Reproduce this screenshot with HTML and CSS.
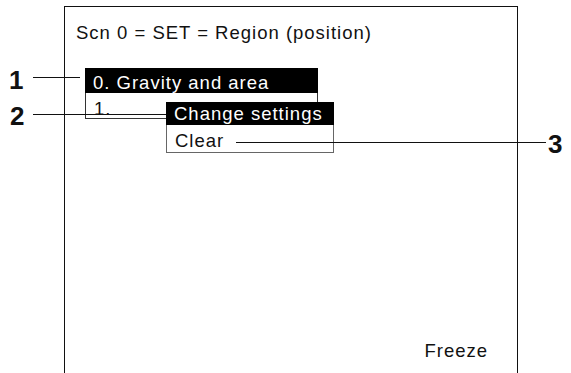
FILE: index.html
```html
<!DOCTYPE html>
<html lang="en">
<head>
    <meta charset="UTF-8">
    <meta name="viewport" content="width=device-width, initial-scale=1.0">
    <title>Scn 0 - Region (position)</title>
    <link rel="stylesheet" href="styles.css">
</head>
<body>
    <div class="page">
        <!-- Tela do monitor -->
        <div class="screen">
            <div class="title">Scn 0 = SET = Region (position)</div>

            <div class="menu">
                <div class="menu-item selected">0. Gravity and area</div>
                <div class="menu-item">1.</div>

                <!-- Submenu aberto -->
                <div class="submenu">
                    <div class="menu-item selected">Change settings</div>
                    <div class="menu-item">Clear</div>
                </div>
            </div>

            <div class="status">Freeze</div>
        </div>

        <!-- Indicações numeradas -->
        <svg class="leaders" width="571" height="373" viewBox="0 0 571 373">
            <line x1="33" y1="77.5" x2="80" y2="77.5" />
            <line x1="33" y1="114.5" x2="166" y2="114.5" />
            <line x1="236" y1="142.5" x2="546" y2="142.5" />
        </svg>
        <span class="callout callout-1">1</span>
        <span class="callout callout-2">2</span>
        <span class="callout callout-3">3</span>
    </div>
</body>
</html>
```

FILE: styles.css
```css
body {
    margin: 0;
    padding: 0;
    background-color: #fff;
    color: #111;
    font-family: "Liberation Sans", Arial, sans-serif;
}
.page {
    position: relative;
    width: 571px;
    height: 373px;
    overflow: hidden;
}
.screen {
    box-sizing: border-box;
    display: flex;
    flex-direction: column;
    width: 454px;
    height: 367px;
    margin: 6px 0 0 64px;
    border: 1px solid #111;
    border-bottom: none;
    font-size: 18.5px;
    letter-spacing: 1px;
    line-height: 21px;
}
.title {
    padding: 15px 0 0 11px;
}
.menu {
    position: relative;
    width: 233px;
    margin: 25px 0 0 20px;
}
.menu-item {
    box-sizing: border-box;
    height: 26px;
    padding: 4px 0 0 8px;
    line-height: 23px;
    background-color: #fff;
    border: 1px solid #333;
    border-top: none;
}
.menu-item.selected {
    height: 25px;
    padding-top: 3px;
    background-color: #000;
    color: #fff;
    border: none;
}
.submenu {
    position: absolute;
    left: 81px;
    top: 34px;
    width: 168px;
}
.submenu .menu-item {
    height: 28px;
    border-color: #666;
}
.submenu .menu-item.selected {
    height: 23px;
    padding-top: 1px;
    line-height: 22px;
}
.status {
    margin-top: auto;
    align-self: flex-end;
    padding: 0 29px 12px 0;
}
.leaders {
    position: absolute;
    left: 0;
    top: 0;
}
.leaders line {
    stroke: #111;
    stroke-width: 1;
}
.callout {
    position: absolute;
    font-size: 26px;
    font-weight: bold;
    line-height: 30px;
    color: #111;
}
.callout-1 {
    left: 9px;
    top: 65px;
}
.callout-2 {
    left: 10px;
    top: 101px;
}
.callout-3 {
    left: 548px;
    top: 129px;
}
```
